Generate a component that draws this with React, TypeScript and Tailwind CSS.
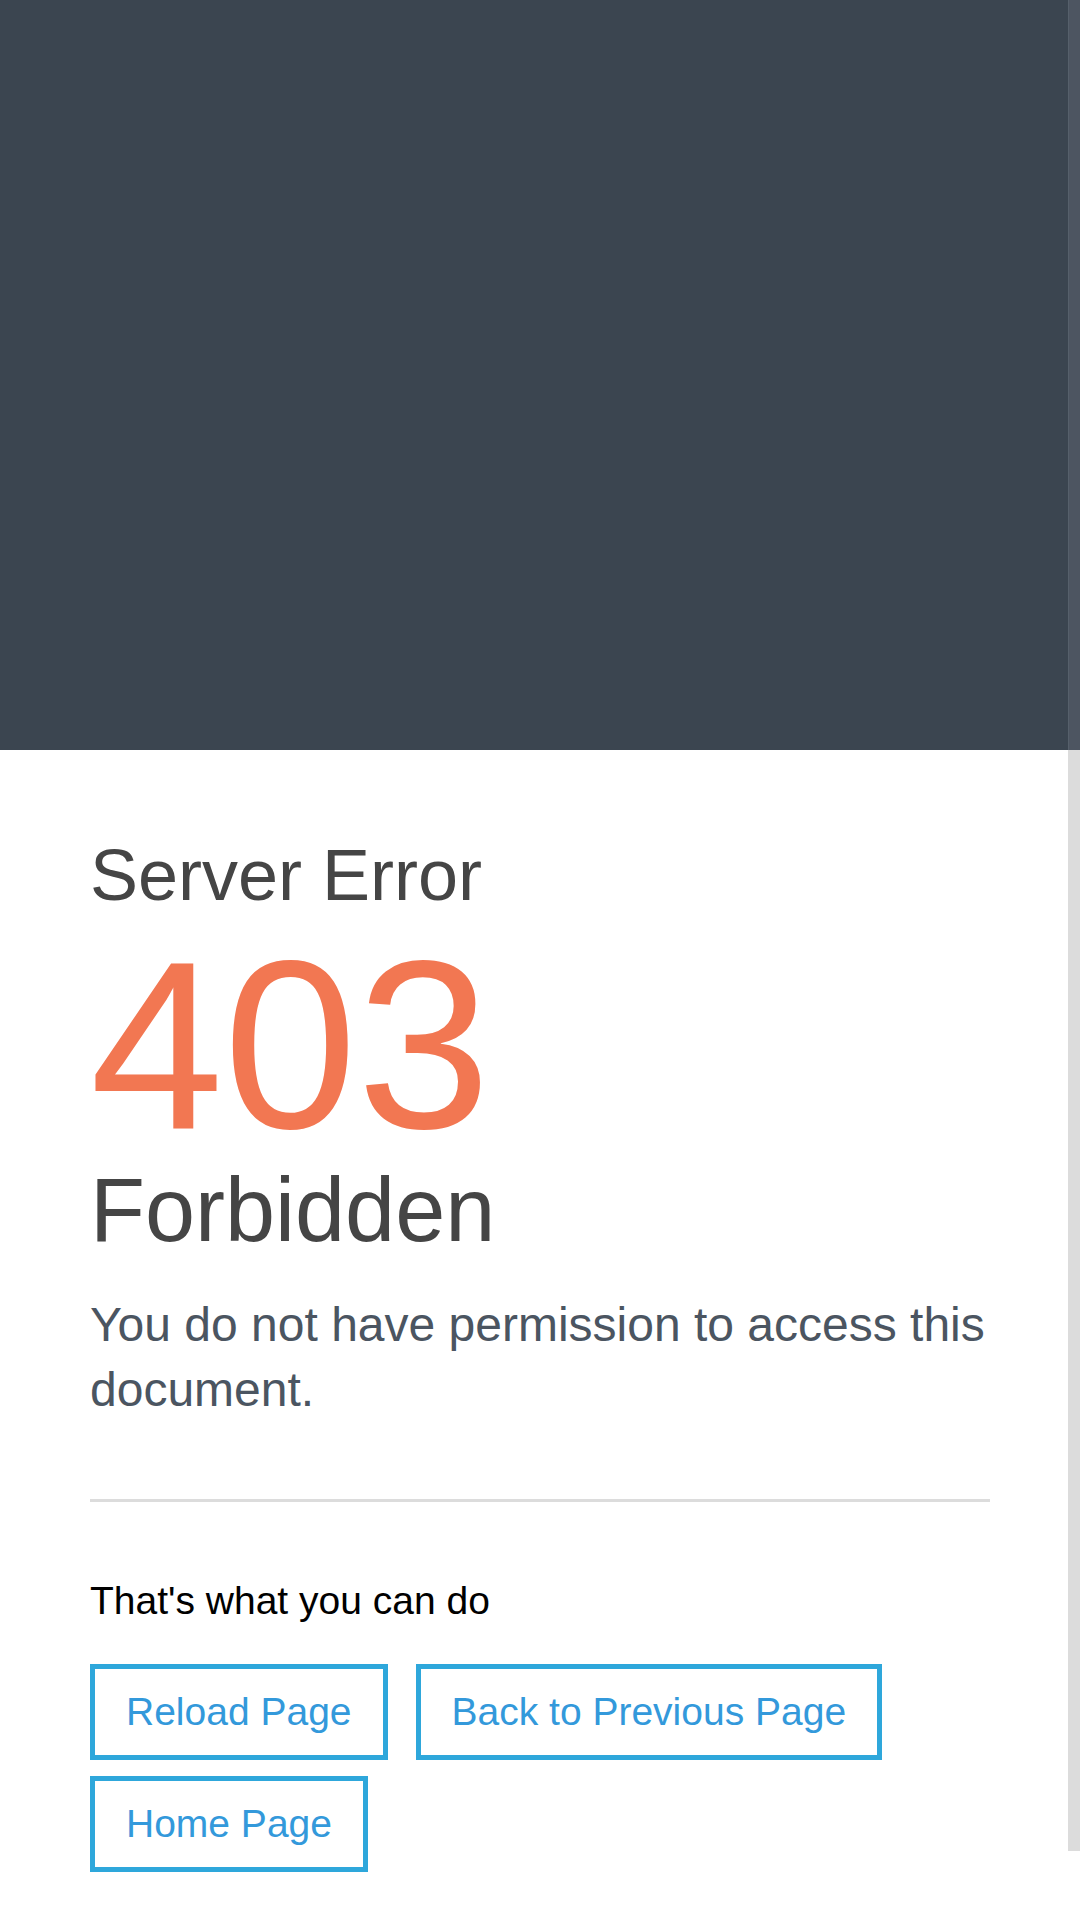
const font = { fontFamily: '"Liberation Sans", Arial, sans-serif' };

const actions = ["Reload Page", "Back to Previous Page", "Home Page"];

export default function App() {
  return (
    <div className="flex min-h-[1920px] w-[1080px] bg-white" style={font}>
      <main className="flex-1 flex flex-col">
        {/* dark top banner */}
        <div className="h-[750px] bg-[#3b4550]" />

        <section className="pl-[90px] pt-[89px] w-[990px]">
          <h2 className="text-[72px] leading-[72px] text-[#454545]">Server Error</h2>
          <h1 className="mt-[14px] text-[240px] leading-[240px] text-[#f27752]">403</h1>
          <h3 className="mt-[1px] text-[90px] leading-[88px] text-[#454545]">Forbidden</h3>
          <p className="mt-[38px] text-[48px] leading-[65px] text-[#4b5561]">
            You do not have permission to access this document.
          </p>

          <hr className="mt-[77px] border-0 h-[3px] bg-[#dcdcdc]" />

          <p className="mt-[77px] text-[39px] leading-[44px] text-black">That's what you can do</p>

          <div className="mt-[41px] flex flex-wrap gap-x-[28px] gap-y-[16px]">
            {actions.map((label) => (
              <button
                key={label}
                className="border-[5px] border-[#2ea7db] px-[31px] py-[20px] text-[39px] leading-[46px] text-[#3399db] bg-white"
              >
                {label}
              </button>
            ))}
          </div>
        </section>
      </main>

      {/* side rail */}
      <aside className="w-[12px] flex flex-col">
        <div className="h-[750px] bg-[#4d5561] border-l border-[#56606b]" />
        <div className="h-[1101px] bg-[#dcdcdc]" />
      </aside>
    </div>
  );
}
